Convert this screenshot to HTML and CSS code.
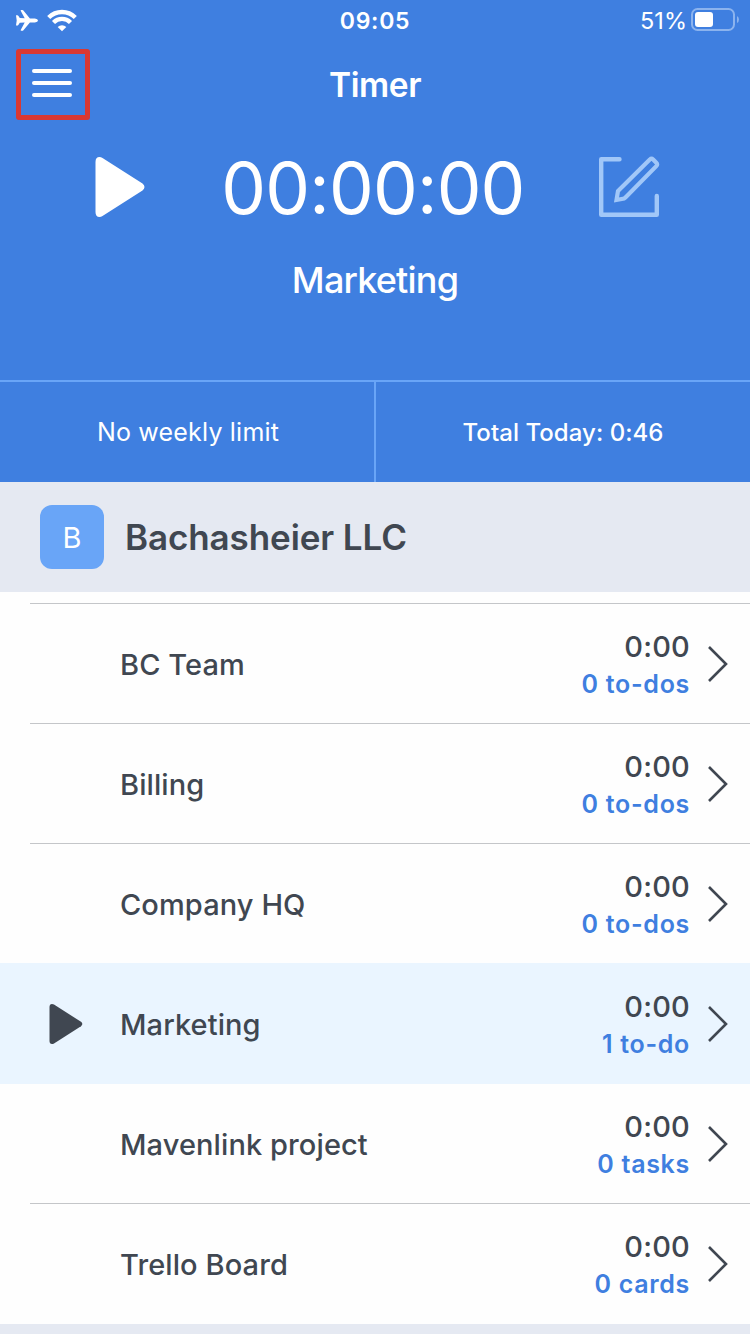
FILE: index.html
```html
<!DOCTYPE html>
<html lang="en">
<head>
    <meta charset="UTF-8">
    <meta name="viewport" content="width=device-width, initial-scale=1.0">
    <title>Timer</title>
    <link rel="stylesheet" href="styles.css">
</head>
<body>
    <header class="header">
        <div class="status-bar">
            <div class="status-left">
                <svg width="22" height="21" viewBox="0 0 22 21" fill="#fff"><path d="M0 5.200h1.400q.5 0 .9.600l1.500 2.200 4.900.2L4.700.8Q4.500 0 5.200 0h1.300q.5 0 .9.500l6.500 7.900h5Q22 8.900 22 10.400t-3.100 2h-5L7.400 20.300q-.4.500-.9.500H5.200q-.7 0-.5-.8l4-7.400-4.900.2-1.500 2.200q-.4.600-.9.600H0l.7-5.200z"/></svg>
                <svg width="30" height="23" viewBox="0 0 30 23" fill="none" stroke="#fff" stroke-width="4.300"><path d="M1.700 8.500a18.800 18.800 0 0 1 26.600 0M6.500 13.500a12 12 0 0 1 17 0"/><path d="M15 22.300l-4.300-4.400a6.100 6.100 0 0 1 8.600 0z" fill="#fff" stroke="none"/></svg>
            </div>
            <span class="clock">09:05</span>
            <div class="status-right">
                <span class="percent">51%</span>
                <svg width="48" height="23" viewBox="0 0 48 23"><rect x="1" y="1" width="42" height="21" rx="5.500" fill="none" stroke="#8bb3ee" stroke-width="2"/><rect x="4" y="4" width="18" height="15" rx="3" fill="#fff"/><path d="M46 8q2 1.200 2 3.500T46 15z" fill="#8bb3ee"/></svg>
            </div>
        </div>

        <div class="nav">
            <button class="menu" aria-label="Menu"><i></i><i></i><i></i></button>
            <h1>Timer</h1>
        </div>

        <div class="timer">
            <svg width="50" height="60" viewBox="0 0 50 60" fill="#fff"><path d="M.5 5Q.5 0 4.500 0q1.500 0 3 1L47.500 26.500q4 3.500 0 7L7.500 59q-1.500 1-3 1-4 0-4-5z"/></svg>
            <span class="time">00:00:00</span>
            <svg width="62" height="62" viewBox="0 0 62 62" fill="none" stroke="#a1c7f8" stroke-width="4.400" stroke-linecap="round" stroke-linejoin="round"><path d="M21.500 3.200H3.200v55.600h55.600V40"/><path d="M18.500 44l1.500-9L51.800 3.500q1.700-1.500 3.400 0l3.100 3.200q1.600 1.700 0 3.400L27.500 41.400l-1.500 1.200z" stroke-width="4.200" stroke-linejoin="miter"/></svg>
        </div>
        <div class="current">Marketing</div>
    </header>

    <div class="stats">
        <div class="limit">No weekly limit</div>
        <div class="total">Total Today: 0:46</div>
    </div>

    <div class="company">
        <span class="avatar">B</span>
        <h2>Bachasheier LLC</h2>
    </div>

    <ul class="projects">
        <li>
            <div class="row">
                <span class="icon"></span>
                <span class="name">BC Team</span>
                <div class="info"><b>0:00</b><a>0 to-dos</a></div>
                <svg class="arrow" width="20" height="36" viewBox="0 0 20 36"><path d="M1 1l17 17L1 35"/></svg>
            </div>
        </li>
        <li>
            <div class="row">
                <span class="icon"></span>
                <span class="name">Billing</span>
                <div class="info"><b>0:00</b><a>0 to-dos</a></div>
                <svg class="arrow" width="20" height="36" viewBox="0 0 20 36"><path d="M1 1l17 17L1 35"/></svg>
            </div>
        </li>
        <li>
            <div class="row">
                <span class="icon"></span>
                <span class="name">Company HQ</span>
                <div class="info"><b>0:00</b><a>0 to-dos</a></div>
                <svg class="arrow" width="20" height="36" viewBox="0 0 20 36"><path d="M1 1l17 17L1 35"/></svg>
            </div>
        </li>
        <li class="active">
            <div class="row">
                <span class="icon"><svg width="34" height="40" viewBox="0 0 34 40" fill="#404751"><path d="M.5 3Q.5 0 3 0q1 0 2 .6L32 17.800q2.600 2.200 0 4.400L5 39.400q-1 .6-2 .6-2.500 0-2.500-3z"/></svg></span>
                <span class="name">Marketing</span>
                <div class="info"><b>0:00</b><a>1 to-do</a></div>
                <svg class="arrow" width="20" height="36" viewBox="0 0 20 36"><path d="M1 1l17 17L1 35"/></svg>
            </div>
        </li>
        <li>
            <div class="row">
                <span class="icon"></span>
                <span class="name">Mavenlink project</span>
                <div class="info"><b>0:00</b><a>0 tasks</a></div>
                <svg class="arrow" width="20" height="36" viewBox="0 0 20 36"><path d="M1 1l17 17L1 35"/></svg>
            </div>
        </li>
        <li>
            <div class="row">
                <span class="icon"></span>
                <span class="name">Trello Board</span>
                <div class="info"><b>0:00</b><a>0 cards</a></div>
                <svg class="arrow" width="20" height="36" viewBox="0 0 20 36"><path d="M1 1l17 17L1 35"/></svg>
            </div>
        </li>
    </ul>
</body>
</html>
```
FILE: styles.css
```css
* { box-sizing: border-box; }
body {
    margin: 0; height: 1334px; overflow: hidden;
    font-family: Inter, "Liberation Sans", sans-serif;
    background-color: #e5e9f2; color: #404751;
}
h1, h2, ul { margin: 0; padding: 0; }
svg { display: block; flex: none; }

.header { height: 380px; background-color: #3f7fe0; color: white; }

.status-bar {
    display: grid; grid-template-columns: 1fr auto 1fr; align-items: center;
    height: 40px; padding: 0 11px 0 16px;
}
.status-left { display: flex; align-items: center; gap: 9px; }
.status-right { display: flex; align-items: center; justify-content: flex-end; gap: 4px; }
.status-right svg { margin-bottom: 2px; }
.clock { padding: 2px 5px 0 0; font-size: 23px; font-weight: 600; letter-spacing: .7px; }
.percent { font-size: 23.500px; }

.nav { display: grid; grid-template-columns: 74px 1fr 74px; height: 88px; padding: 9px 16px 0; }
.menu {
    display: flex; flex-direction: column; align-items: center; gap: 8px;
    width: 74px; height: 71px; padding: 15px 2px 0 0;
    background: none; border: 5px solid #da3832; border-radius: 3px;
}
.menu i { width: 40px; height: 4px; border-radius: 2px; background-color: white; }
.nav h1 { font-size: 33.500px; line-height: 72px; font-weight: 600; letter-spacing: -.4px; text-align: center; }

.timer { display: flex; align-items: center; justify-content: space-between; height: 118px; padding: 0 90px 0 95px; }
.time { padding: 2px 0 0 3px; font-size: 71px; font-weight: 400; letter-spacing: -.8px; }
.current { font-size: 36px; line-height: 68px; font-weight: 500; letter-spacing: -.8px; text-align: center; }

.stats { display: grid; grid-template-columns: 376px 1fr; height: 102px; background-color: #3f7fe0; border-top: 2px solid #69a5f7; color: white; }
.stats div { line-height: 100px; text-align: center; font-size: 25px; letter-spacing: .2px; }
.stats .limit { padding-left: 2px; border-right: 2px solid #69a5f7; }
.stats .total { padding-top: 1px; line-height: 99px; font-size: 24px; font-weight: 500; letter-spacing: .05px; }

.company { display: flex; align-items: center; gap: 21px; height: 110px; padding-left: 40px; }
.avatar { width: 64px; height: 64px; border-radius: 12px; background-color: #69a5f7; color: white; font-size: 29px; font-weight: 400; line-height: 66px; text-align: center; }
.company h2 { font-size: 35px; font-weight: 600; letter-spacing: -.1px; }

.projects { padding: 11px 0 1px; background-color: #fefefe; list-style: none; }
.projects li { padding-left: 30px; }
.row { display: flex; align-items: center; height: 120px; padding-right: 22px; border-top: 1px solid #c4c6c9; }
.active { background-color: #eaf5ff; box-shadow: 0 1px 0 #eaf5ff; }
.active .row, .active + li .row { border-color: transparent; }
.icon { width: 90px; padding-left: 19px; }
.name { flex: 1; padding-top: 2px; font-size: 29px; font-weight: 450; letter-spacing: .1px; }
.info { text-align: right; padding-top: 4px; margin-right: 18px; }
.info b { display: block; font-size: 29px; line-height: 38px; font-weight: 450; letter-spacing: .2px; }
.info a { display: block; font-size: 25px; line-height: 37px; font-weight: 600; letter-spacing: .7px; color: #3f7fe0; }
.arrow { fill: none; stroke: #404751; stroke-width: 2.600; }
```
